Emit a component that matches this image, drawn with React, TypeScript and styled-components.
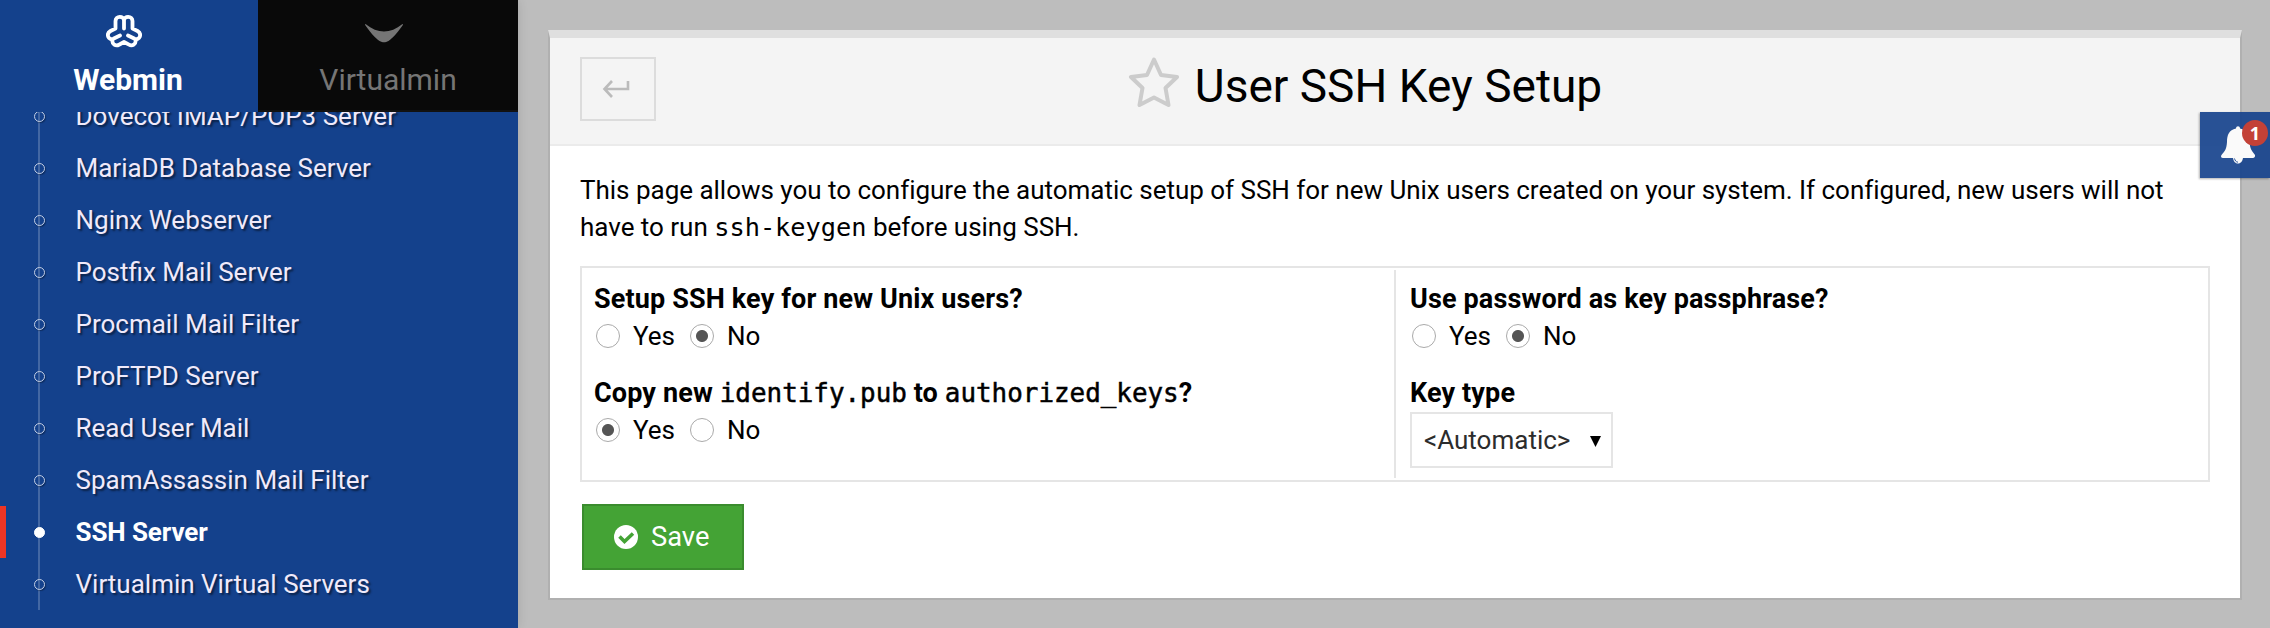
import React from 'react';
import styled, { createGlobalStyle, css } from 'styled-components';

const GlobalStyle = createGlobalStyle`
  * { box-sizing: border-box; }
  html, body { margin: 0; height: 100%; overflow: hidden; }
  body {
    background: #bdbdbd;
    color: #000;
    font: 26px/37px Roboto, sans-serif;
  }
`;

const Page = styled.div`
  display: flex;
  height: 628px;
  position: relative;
`;

const Sidebar = styled.aside`
  display: flex;
  flex-direction: column;
  flex: 0 0 518px;
  background: #14418c;
  box-shadow: 0 0 10px rgba(0, 0, 0, 0.12);
`;

const Tabs = styled.div`
  display: grid;
  grid-template-columns: 258px 260px;
  height: 112px;
  flex: none;
`;

const Tab = styled.div<{ $active?: boolean }>`
  display: flex;
  flex-direction: column;
  align-items: center;
  color: #757575;
  background: #090909;
  border-bottom: 2px solid #121212;
  font-size: 30px;
  line-height: 34px;
  padding-top: 11px;
  ${p => p.$active && css`
    color: #fff;
    background: transparent;
    border-color: transparent;
    font-weight: 700;
    padding-right: 2px;
  `}
  svg { height: 40px; display: block; margin-right: 8px; }
  span { margin-top: 12px; }
`;

const MenuClip = styled.nav`
  flex: 1;
  overflow: hidden;
`;

const Menu = styled.ul`
  list-style: none;
  margin: -22px 0 0;
  padding: 0;
  background: linear-gradient(rgba(255, 255, 255, 0.2), rgba(255, 255, 255, 0.2)) no-repeat 38px 0 / 2px 520px;
`;

const MenuItem = styled.li<{ $active?: boolean }>`
  display: flex;
  align-items: center;
  height: 52px;
  padding-left: 33.5px;
  color: #f0eafa;
  text-shadow: 2px 2px 2px rgba(0, 0, 0, 0.5);
  ${p => p.$active && css`
    color: #fff;
    font-weight: 700;
    letter-spacing: -0.1px;
    text-shadow: none;
    box-shadow: inset 6px 0 #ee3524;
  `}
`;

const Bullet = styled.i<{ $active?: boolean }>`
  width: 11px;
  height: 11px;
  margin-right: 31px;
  border-radius: 50%;
  border: 1.5px solid ${p => (p.$active ? '#fff' : '#c3cee4')};
  background: ${p => (p.$active ? '#fff' : 'transparent')};
  box-shadow: ${p => (p.$active ? 'none' : '1px 1px 1px rgba(0, 0, 0, 0.3)')};
`;

const Main = styled.main`
  flex: 1;
  padding: 30px 28px 28px 30px;
`;

const Card = styled.section`
  height: 570px;
  background: #fff;
  border: 2px solid #b0b0b0;
  border-top: 8px solid #dfdfdf;
`;

const Header = styled.header`
  display: grid;
  grid-template-columns: 76px 1fr 76px;
  height: 108px;
  padding: 19px 30px 0;
  background: #f4f4f4;
  border-bottom: 2px solid #ebebeb;
`;

const BackButton = styled.button`
  display: flex;
  align-items: center;
  justify-content: center;
  width: 76px;
  height: 64px;
  padding: 0 5px 0 0;
  border: 2px solid #dcdcdc;
  background: transparent;
`;

const Title = styled.h1`
  display: flex;
  justify-content: center;
  margin: 0 61px 0 0;
  font-size: 46px;
  font-weight: 400;
  line-height: 58px;
  svg { margin-right: 14px; }
`;

const Body = styled.div`
  padding: 26px 30px;
`;

const Intro = styled.p`
  margin: 0 0 20px;
  letter-spacing: -0.02px;
`;

const Mono = styled.code<{ $strong?: boolean }>`
  font-family: 'DejaVu Sans Mono', monospace;
  font-size: ${p => (p.$strong ? '25.9px' : '25.3px')};
  line-height: 1;
  font-weight: 400;
  letter-spacing: 0;
  -webkit-text-stroke: ${p => (p.$strong ? '0.5px #000' : '0')};
`;

const Fields = styled.div`
  display: grid;
  grid-template-columns: 812px 1fr;
  height: 216px;
  padding: 2px 0;
  border: 2px solid #e5e5e5;
`;

const Column = styled.div`
  padding: 11px 12px 0;
  & + & { border-left: 2px solid #e5e5e5; padding-left: 14px; }
`;

const Field = styled.div`
  height: 94px;
`;

const Label = styled.div`
  font-size: 27px;
  font-weight: 700;
  letter-spacing: 0.14px;
  height: 37px;
`;

const Choices = styled.div`
  display: flex;
  align-items: center;
  height: 36px;
  padding-left: 2px;
`;

const Choice = styled.label`
  display: flex;
  align-items: center;
  width: 94px;
`;

const Radio = styled.i<{ $on?: boolean }>`
  width: 24px;
  height: 24px;
  margin-right: 13px;
  border: 1.5px solid #aaa;
  border-radius: 50%;
  background: ${p => (p.$on ? 'radial-gradient(circle, #555 5.5px, #fff 6.5px)' : '#fff')};
`;

const Select = styled.div`
  display: flex;
  align-items: center;
  justify-content: space-between;
  width: 203px;
  height: 56px;
  padding: 0 10px 0 12px;
  border: 2px solid #e5e5e5;
  color: #2c2c2c;
  svg { position: relative; top: 1px; }
`;

const SaveButton = styled.button`
  display: flex;
  align-items: center;
  width: 162px;
  height: 66px;
  margin: 22px 0 0 2px;
  padding: 0 0 0 30px;
  border: 2px solid #3a8c2e;
  background: #44a335;
  color: #fff;
  font: 27.3px/37px Roboto, sans-serif;
  svg { margin-right: 13px; }
`;

const Alerts = styled.div`
  position: absolute;
  top: 112px;
  right: 0;
  width: 70px;
  height: 66px;
  background: rgba(20, 65, 140, 0.91);
  box-shadow: -1px 1px 2px rgba(0, 0, 0, 0.3);
  svg { position: absolute; left: 20px; top: 13px; }
`;

const Badge = styled.span`
  position: absolute;
  left: 42px;
  top: 8px;
  width: 26px;
  height: 26px;
  border-radius: 50%;
  background: #c34137;
  color: #fff;
  font: 700 18px/26px 'Open Sans', sans-serif;
  text-align: center;
`;

const WebminIcon = () => (
  <svg width="36" height="40" viewBox="0 0 36 40" fill="none" stroke="#fff" strokeWidth="3.8" strokeLinecap="round" strokeLinejoin="round">
    <path d="M18 17.500V9.500C18 4.500 9.500 4.500 9.500 10V17.500L4.500 20C-.5 23 2.500 29.500 7.300 27.800L14 24.500M18 9.500C18 4.500 26.500 4.500 26.500 10V17.500L31.500 20C36.500 23 33.500 29.500 28.700 27.800L22 24.500M6.500 28.500C5.500 33.500 10 35.300 13 33.700L18 31L23 33.700C26 35.300 30.500 33.500 29.500 28.500" />
  </svg>
);

const VirtualminIcon = () => (
  <svg width="38" height="40" viewBox="0 0 38 40" fill="#757575">
    <path d="M.5 13C13 23 25 23 37.500 13Q38.500 13 37.500 14.500C32 22 28 27 23.500 30C20 31.800 18 31.800 14.500 30C10 27 6 22 .5 14.500Q-.5 13 .5 13Z" />
  </svg>
);

const BackIcon = () => (
  <svg width="28" height="20" viewBox="0 0 28 20" fill="none" stroke="#bbb" strokeWidth="2.6">
    <path d="M26 2V10H3M10 2L2.500 10L10 18" />
  </svg>
);

const StarIcon = () => (
  <svg width="54" height="54" viewBox="0 0 54 54" fill="none" stroke="#ccc" strokeWidth="4" strokeLinejoin="round">
    <path d="M27 2.500L34 18L50 20L38.500 31L41.500 48L27 40.500L12.500 48L15.500 31L4 20L20 18Z" />
  </svg>
);

const CheckIcon = () => (
  <svg width="24" height="24" viewBox="0 0 24 24">
    <circle cx="12" cy="12" r="12" fill="#fff" />
    <path d="M5.500 11.500L10.500 16.500L19 8.500" fill="none" stroke="#44a335" strokeWidth="3.600" />
  </svg>
);

const BellIcon = () => (
  <svg width="36" height="40" viewBox="0 0 36 40">
    <path fill="#fafafa" d="M16 3.500C16 .5 20 .5 20 3.500C27 5 29 10 29.500 17C30 24 32 26 35 30C35.500 32 34 33 33 33H23C22.500 36 21 38.500 18 38.500S13.500 36 13 33H3C1 33 .5 31 1.500 30C5 26 6.500 24 7 17C7 10 9 5 16 3.500Z" />
    <path d="M14.500 33.500C15 35.500 16 37 18 37.200" stroke="#2a5297" strokeWidth="1" fill="none" />
  </svg>
);

const MODULES = [
  'Dovecot IMAP/POP3 Server',
  'MariaDB Database Server',
  'Nginx Webserver',
  'Postfix Mail Server',
  'Procmail Mail Filter',
  'ProFTPD Server',
  'Read User Mail',
  'SpamAssassin Mail Filter',
  'SSH Server',
  'Virtualmin Virtual Servers',
];

const YesNo = ({ yes }: { yes?: boolean }) => (
  <Choices>
    <Choice><Radio $on={yes} />Yes</Choice>
    <Choice><Radio $on={!yes} />No</Choice>
  </Choices>
);

export default function App() {
  return (
    <Page>
      <GlobalStyle />
      <Sidebar>
        <Tabs>
          <Tab $active><WebminIcon /><span>Webmin</span></Tab>
          <Tab><VirtualminIcon /><span>Virtualmin</span></Tab>
        </Tabs>
        <MenuClip>
          <Menu>
            {MODULES.map(name => {
              const active = name === 'SSH Server';
              return <MenuItem key={name} $active={active}><Bullet $active={active} />{name}</MenuItem>;
            })}
          </Menu>
        </MenuClip>
      </Sidebar>
      <Main>
        <Card>
          <Header>
            <BackButton aria-label="Back"><BackIcon /></BackButton>
            <Title><StarIcon />User SSH Key Setup</Title>
          </Header>
          <Body>
            <Intro>
              This page allows you to configure the automatic setup of SSH for new Unix users created on your system. If configured, new users will not have to run <Mono>ssh-keygen</Mono> before using SSH.
            </Intro>
            <Fields>
              <Column>
                <Field><Label>Setup SSH key for new Unix users?</Label><YesNo /></Field>
                <Field>
                  <Label>Copy new <Mono $strong>identify.pub</Mono> to <Mono $strong>authorized_keys</Mono>?</Label>
                  <YesNo yes />
                </Field>
              </Column>
              <Column>
                <Field><Label>Use password as key passphrase?</Label><YesNo /></Field>
                <Field>
                  <Label>Key type</Label>
                  <Select>
                    <span>&lt;Automatic&gt;</span>
                    <svg width="11" height="11" viewBox="0 0 11 11"><path d="M0 0H11L5.500 11Z" /></svg>
                  </Select>
                </Field>
              </Column>
            </Fields>
            <SaveButton><CheckIcon />Save</SaveButton>
          </Body>
        </Card>
      </Main>
      <Alerts><BellIcon /><Badge>1</Badge></Alerts>
    </Page>
  );
}
